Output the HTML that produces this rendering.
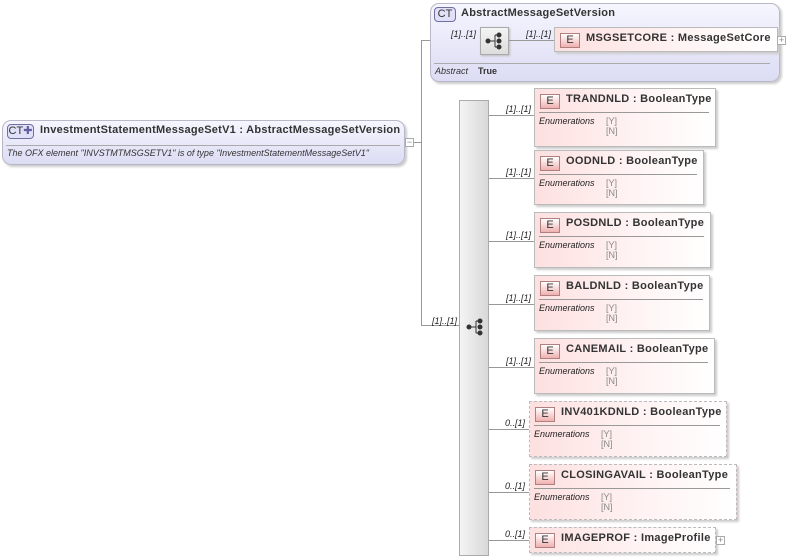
<!DOCTYPE html>
<html><head><meta charset="utf-8"><style>
*{margin:0;padding:0;box-sizing:border-box}
body{width:794px;height:560px;background:#fff;position:relative;overflow:hidden;font-family:"Liberation Sans",Arial,sans-serif;font-size:11px;color:#333}
.a{position:absolute}
.hl{position:absolute;height:1px;background:#999}
.vl{position:absolute;width:1px;background:#999}
.ct{position:absolute;border:1px solid #b8b8c8;border-radius:9px;background:linear-gradient(#f6f6ff,#dcdcf4);box-shadow:2px 2px 2px #ccc}
.badge{position:absolute;border:1px solid #7070a0;border-radius:4px;background:#e0e0f8;font-size:11px;text-align:center;color:#333;line-height:13px}
.el{position:absolute;border:1px solid #bbb;background:linear-gradient(90deg,#fde0e0,#fff4f4 60%,#fff);box-shadow:2px 2px 2px #ccc}
.el.d{border:1.5px dashed #bbb}
.eb{position:absolute;left:5px;top:5px;width:20px;height:15px;border:1px solid #b08080;background:linear-gradient(#fff,#f0b0b0);font-size:11px;text-align:center;line-height:13px;color:#333}
.et{position:absolute;left:31px;top:4px;font-weight:bold;font-size:11px;white-space:nowrap;color:#333;letter-spacing:0.3px}
.sep{position:absolute;left:4px;right:6px;top:23px;height:1px;background:#999}
.en{position:absolute;left:4px;top:27px;font-style:italic;font-size:9px;color:#222}
.yn{position:absolute;left:71px;top:27px;font-size:9px;color:#888;line-height:10px}
.card{position:absolute;font-style:italic;font-size:9px;color:#222;text-align:right;width:40px}
.seq{position:absolute;border:1px solid #aaa;background:linear-gradient(90deg,#f4f4f4,#d8d8d8)}
.pm{position:absolute;width:9px;height:9px;border:1px solid #aaa;background:#fff;font-size:9px;line-height:7px;text-align:center;color:#888}
</style></head><body>

<div class="ct" style="left:2px;top:120px;width:403px;height:45px"></div>
<div class="badge" style="left:7px;top:124px;width:27px;height:15px">CT<span style="color:#6060a0">✚</span></div>
<div class="a" style="left:40px;top:124px;font-weight:bold;white-space:nowrap;letter-spacing:0.25px">InvestmentStatementMessageSetV1 : AbstractMessageSetVersion</div>
<div class="hl" style="left:6px;top:145px;width:394px;background:#aaa"></div>
<div class="a" style="left:7px;top:148px;font-style:italic;font-size:9px;white-space:nowrap">The OFX element "INVSTMTMSGSETV1" is of type "InvestmentStatementMessageSetV1"</div>
<div class="pm" style="left:405px;top:138px">−</div>
<div class="hl" style="left:414px;top:142px;width:7px"></div>
<div class="vl" style="left:421px;top:40px;height:286px"></div>
<div class="hl" style="left:421px;top:40px;width:60px"></div>
<div class="hl" style="left:421px;top:325px;width:38px"></div>
<div class="card" style="left:417px;top:316px">[1]..[1]</div>

<div class="ct" style="left:430px;top:3px;width:350px;height:79px"></div>
<div class="badge" style="left:434px;top:7px;width:22px;height:15px;border-radius:4px">CT</div>
<div class="a" style="left:461px;top:7px;font-weight:bold;letter-spacing:0.25px">AbstractMessageSetVersion</div>
<div class="card" style="left:436px;top:29px">[1]..[1]</div>
<div class="a" style="left:480px;top:27px;width:29px;height:28px;border:1px solid #aaa;background:linear-gradient(#f4f4f4,#ddd);box-shadow:1px 1px 2px #bbb"></div>
<svg class="a" style="left:485px;top:32px" width="20" height="18"><g fill="#333" stroke="#333"><circle cx="3" cy="9" r="2"/><circle cx="14" cy="3" r="2"/><circle cx="14" cy="9" r="2"/><circle cx="14" cy="15" r="2"/><path d="M3 9H10M10 3V15M10 3H14M10 15H14" fill="none"/></g></svg>
<div class="hl" style="left:509px;top:40px;width:45px"></div>
<div class="card" style="left:511px;top:29px">[1]..[1]</div>
<div class="el" style="left:554px;top:27px;width:224px;height:25px"><div class="eb">E</div><div class="et">MSGSETCORE : MessageSetCore</div></div>
<div class="pm" style="left:777px;top:36px">+</div>
<div class="hl" style="left:434px;top:63px;width:336px;background:#aaa"></div>
<div class="a" style="left:435px;top:66px;font-style:italic;font-size:9px">Abstract</div>
<div class="a" style="left:478px;top:66px;font-size:9px;font-weight:bold">True</div>

<div class="seq" style="left:459px;top:100px;width:30px;height:456px"></div>
<svg class="a" style="left:466px;top:318px" width="20" height="18"><g fill="#333" stroke="#333"><circle cx="3" cy="9" r="2"/><circle cx="14" cy="3" r="2"/><circle cx="14" cy="9" r="2"/><circle cx="14" cy="15" r="2"/><path d="M3 9H10M10 3V15M10 3H14M10 15H14" fill="none"/></g></svg>

<div class="hl" style="left:489px;top:115px;width:46px"></div><div class="card" style="left:491px;top:104px">[1]..[1]</div>
<div class="el" style="left:534px;top:88px;width:182px;height:59px"><div class="eb">E</div><div class="et">TRANDNLD : BooleanType</div><div class="sep"></div><div class="en">Enumerations</div><div class="yn">[Y]<br>[N]</div></div>

<div class="hl" style="left:489px;top:178px;width:46px"></div><div class="card" style="left:491px;top:167px">[1]..[1]</div>
<div class="el" style="left:534px;top:150px;width:170px;height:55px"><div class="eb">E</div><div class="et">OODNLD : BooleanType</div><div class="sep"></div><div class="en">Enumerations</div><div class="yn">[Y]<br>[N]</div></div>

<div class="hl" style="left:489px;top:241px;width:46px"></div><div class="card" style="left:491px;top:230px">[1]..[1]</div>
<div class="el" style="left:534px;top:212px;width:177px;height:56px"><div class="eb">E</div><div class="et">POSDNLD : BooleanType</div><div class="sep"></div><div class="en">Enumerations</div><div class="yn">[Y]<br>[N]</div></div>

<div class="hl" style="left:489px;top:304px;width:46px"></div><div class="card" style="left:491px;top:293px">[1]..[1]</div>
<div class="el" style="left:534px;top:275px;width:176px;height:56px"><div class="eb">E</div><div class="et">BALDNLD : BooleanType</div><div class="sep"></div><div class="en">Enumerations</div><div class="yn">[Y]<br>[N]</div></div>

<div class="hl" style="left:489px;top:367px;width:46px"></div><div class="card" style="left:491px;top:356px">[1]..[1]</div>
<div class="el" style="left:534px;top:338px;width:181px;height:56px"><div class="eb">E</div><div class="et">CANEMAIL : BooleanType</div><div class="sep"></div><div class="en">Enumerations</div><div class="yn">[Y]<br>[N]</div></div>

<div class="hl" style="left:489px;top:429px;width:40px"></div><div class="card" style="left:485px;top:418px">0..[1]</div>
<div class="el d" style="left:529px;top:401px;width:198px;height:56px"><div class="eb">E</div><div class="et">INV401KDNLD : BooleanType</div><div class="sep"></div><div class="en">Enumerations</div><div class="yn">[Y]<br>[N]</div></div>

<div class="hl" style="left:489px;top:492px;width:40px"></div><div class="card" style="left:485px;top:481px">0..[1]</div>
<div class="el d" style="left:529px;top:464px;width:208px;height:56px"><div class="eb">E</div><div class="et">CLOSINGAVAIL : BooleanType</div><div class="sep"></div><div class="en">Enumerations</div><div class="yn">[Y]<br>[N]</div></div>

<div class="hl" style="left:489px;top:540px;width:40px"></div><div class="card" style="left:485px;top:529px">0..[1]</div>
<div class="el d" style="left:529px;top:527px;width:187px;height:26px"><div class="eb">E</div><div class="et">IMAGEPROF : ImageProfile</div></div>
<div class="pm" style="left:716px;top:536px">+</div>

</body></html>
